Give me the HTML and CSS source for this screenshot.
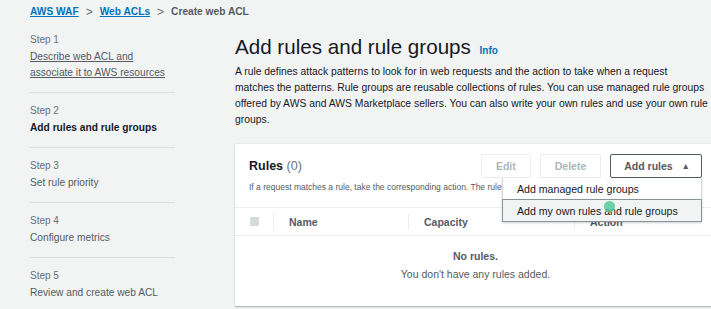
FILE: index.html
```html
<!DOCTYPE html>
<html lang="en">
<head>
  <meta charset="UTF-8">
  <meta name="viewport" content="width=device-width, initial-scale=1.0">
  <title>Create web ACL</title>
  <link rel="stylesheet" href="styles.css">
</head>
<body>
  <nav class="crumbs">
    <a href="#">AWS WAF</a>
    <span class="sep">&gt;</span>
    <a href="#">Web ACLs</a>
    <span class="sep">&gt;</span>
    <span class="current">Create web ACL</span>
  </nav>

  <div class="layout">
    <ul class="steps">
      <li class="step">
        <div class="step-label">Step 1</div>
        <a class="step-title link" href="#">Describe web ACL and associate it to AWS resources</a>
      </li>
      <li class="step">
        <div class="step-label">Step 2</div>
        <div class="step-title active">Add rules and rule groups</div>
      </li>
      <li class="step">
        <div class="step-label">Step 3</div>
        <div class="step-title">Set rule priority</div>
      </li>
      <li class="step">
        <div class="step-label">Step 4</div>
        <div class="step-title">Configure metrics</div>
      </li>
      <li class="step">
        <div class="step-label">Step 5</div>
        <div class="step-title">Review and create web ACL</div>
      </li>
    </ul>

    <main class="content">
      <h1>Add rules and rule groups <a class="info" href="#">Info</a></h1>
      <p class="lead">A rule defines attack patterns to look for in web requests and the action to take when a request<br>
        matches the patterns. Rule groups are reusable collections of rules. You can use managed rule groups<br>
        offered by AWS and AWS Marketplace sellers. You can also write your own rules and use your own rule<br>
        groups.</p>

      <section class="card">
        <div class="card-head">
          <div class="head-text">
            <h2>Rules <span class="count">(0)</span></h2>
            <p>If a request matches a rule, take the corresponding action. The rules are prioritized in order they appear.</p>
          </div>
          <div class="actions">
            <button class="btn" disabled>Edit</button>
            <button class="btn" disabled>Delete</button>
            <div class="dropdown">
              <button class="btn primary">Add rules <span class="caret">&#9650;</span></button>
              <ul class="menu">
                <li>Add managed rule groups</li>
                <li class="hover">Add my own rules and rule groups<span class="pointer"></span></li>
              </ul>
            </div>
          </div>
        </div>

        <div class="thead">
          <div class="cell check"><span class="box"></span></div>
          <div class="cell name">Name</div>
          <div class="cell capacity">Capacity</div>
          <div class="cell action">Action</div>
        </div>
        <div class="empty">
          <strong>No rules.</strong>
          <span>You don't have any rules added.</span>
        </div>
      </section>
    </main>
  </div>
</body>
</html>
```

FILE: styles.css
```css
html {
  background: #f2f3f3;
  font-family: "Liberation Sans", Arial, sans-serif;
  color: #16191f;
}
body {
  margin: 0;
  padding: 0;
  width: 711px;
  height: 309px;
  overflow: hidden;
}
a {
  color: #0073bb;
}
.crumbs {
  display: flex;
  align-items: center;
  gap: 7px;
  padding: 4px 0 0 30px;
  height: 16px;
  font-size: 10.2px;
  font-weight: bold;
  line-height: 16px;
}
.crumbs .sep {
  color: #687078;
  font-weight: normal;
  font-size: 12px;
}
.crumbs .current {
  color: #545b64;
}
.layout {
  display: flex;
  gap: 60px;
  padding: 12px 0 0 30px;
}
.steps {
  list-style: none;
  margin: 0;
  padding: 0;
  width: 145px;
  flex-shrink: 0;
}
.step {
  padding: 10px 0 11px;
  border-bottom: 1px solid #dadfe0;
}
.step:first-child {
  padding-top: 0;
}
.step:last-child {
  border-bottom: none;
}
.step-label {
  font-size: 10px;
  line-height: 16px;
  margin-bottom: 1px;
  color: #687078;
}
.step-title {
  display: block;
  font-size: 10.2px;
  line-height: 16px;
  color: #545b64;
}
.step-title.active {
  color: #16191f;
  font-weight: bold;
}
.content {
  width: 481px;
  flex-shrink: 0;
}
h1 {
  margin: 3px 0 1px;
  font-size: 20.6px;
  font-weight: normal;
  line-height: 24px;
}
h1 .info {
  font-size: 10px;
  font-weight: bold;
  text-decoration: none;
  margin-left: 3px;
}
.lead {
  margin: 0 0 16px;
  font-size: 10.35px;
  line-height: 16px;
  white-space: nowrap;
  color: #16191f;
}
.card {
  background: #fff;
  box-shadow: 0 1px 1px rgba(0, 28, 36, 0.25), 0 0 1px rgba(0, 28, 36, 0.2);
}
.card-head {
  display: flex;
  justify-content: space-between;
  padding: 10px 14px 14px;
  border-bottom: 1px solid #eaeded;
}
.head-text {
  padding-top: 4px;
  min-width: 0;
}
.head-text h2 {
  margin: 0 0 7px;
  font-size: 12.5px;
  line-height: 16px;
}
.head-text .count {
  font-weight: normal;
  color: #687078;
}
.head-text p {
  margin: 0;
  font-size: 8.5px;
  line-height: 12px;
  white-space: nowrap;
  color: #545b64;
}
.actions {
  display: flex;
  align-items: flex-start;
  gap: 9px;
  flex-shrink: 0;
}
.btn {
  height: 24px;
  padding: 0 14px;
  background: #fff;
  border: 1px solid #eaeded;
  border-radius: 2px;
  font-family: inherit;
  font-size: 10.5px;
  font-weight: bold;
  color: #aab7b8;
}
.btn.primary {
  border-color: #545b64;
  color: #545b64;
  padding: 0 11px 0 13px;
  cursor: pointer;
}
.caret {
  font-size: 8.5px;
  margin-left: 6px;
  vertical-align: 1px;
}
.dropdown {
  position: relative;
}
.menu {
  position: absolute;
  top: 24px;
  right: 0;
  z-index: 10;
  width: 198px;
  margin: 0;
  padding: 0;
  list-style: none;
  background: #fff;
  border: 1px solid #d5dbdb;
  border-top: none;
  box-shadow: 0 1px 2px rgba(0, 28, 36, 0.2);
}
.menu li {
  position: relative;
  height: 22px;
  padding: 0 14px;
  font-size: 10.6px;
  line-height: 22px;
  color: #16191f;
  white-space: nowrap;
}
.menu li.hover {
  background: #f2f3f3;
  outline: 1px solid #879596;
  height: 21px;
}
.pointer {
  position: absolute;
  left: 101px;
  top: 1px;
  width: 11px;
  height: 11px;
  border-radius: 50%;
  background: rgba(80, 205, 150, 0.85);
}
.thead {
  display: flex;
  align-items: center;
  height: 27px;
  border-bottom: 1px solid #eaeded;
  font-size: 10.5px;
  font-weight: bold;
  color: #545b64;
}
.cell {
  height: 17px;
  display: flex;
  align-items: center;
  padding-left: 15px;
  border-left: 1px solid #eaeded;
}
.cell.check {
  width: 23px;
  padding-left: 15px;
  border-left: none;
}
.box {
  width: 9px;
  height: 9px;
  background: #d5dbdb;
  border-radius: 1px;
}
.cell.name {
  width: 119px;
}
.cell.capacity {
  width: 150px;
}
.empty {
  display: flex;
  flex-direction: column;
  align-items: center;
  gap: 2px;
  padding: 12px 0 24px;
  font-size: 10.5px;
  line-height: 16px;
  color: #545b64;
}
```
